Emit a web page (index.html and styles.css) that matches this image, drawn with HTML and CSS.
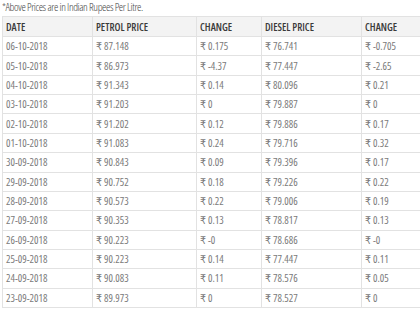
FILE: index.html
```html
<!DOCTYPE html>
<html>
<head>
<meta charset="utf-8">
<link rel="stylesheet" href="styles.css">
</head>
<body>
<p class="note">*Above Prices are in Indian Rupees Per Litre.</p>
<table class="prices">
<colgroup><col class="c1"><col class="c2"><col class="c3"><col class="c4"><col class="c5"></colgroup>
<thead>
<tr><th>DATE</th><th>PETROL PRICE</th><th>CHANGE</th><th>DIESEL PRICE</th><th>CHANGE</th></tr>
</thead>
<tbody>
<tr><td>06-10-2018</td><td>₹ 87.148</td><td>₹ 0.175</td><td>₹ 76.741</td><td>₹ -0.705</td></tr>
<tr><td>05-10-2018</td><td>₹ 86.973</td><td>₹ -4.37</td><td>₹ 77.447</td><td>₹ -2.65</td></tr>
<tr><td>04-10-2018</td><td>₹ 91.343</td><td>₹ 0.14</td><td>₹ 80.096</td><td>₹ 0.21</td></tr>
<tr><td>03-10-2018</td><td>₹ 91.203</td><td>₹ 0</td><td>₹ 79.887</td><td>₹ 0</td></tr>
<tr><td>02-10-2018</td><td>₹ 91.202</td><td>₹ 0.12</td><td>₹ 79.886</td><td>₹ 0.17</td></tr>
<tr><td>01-10-2018</td><td>₹ 91.083</td><td>₹ 0.24</td><td>₹ 79.716</td><td>₹ 0.32</td></tr>
<tr><td>30-09-2018</td><td>₹ 90.843</td><td>₹ 0.09</td><td>₹ 79.396</td><td>₹ 0.17</td></tr>
<tr><td>29-09-2018</td><td>₹ 90.752</td><td>₹ 0.18</td><td>₹ 79.226</td><td>₹ 0.22</td></tr>
<tr><td>28-09-2018</td><td>₹ 90.573</td><td>₹ 0.22</td><td>₹ 79.006</td><td>₹ 0.19</td></tr>
<tr><td>27-09-2018</td><td>₹ 90.353</td><td>₹ 0.13</td><td>₹ 78.817</td><td>₹ 0.13</td></tr>
<tr><td>26-09-2018</td><td>₹ 90.223</td><td>₹ -0</td><td>₹ 78.686</td><td>₹ -0</td></tr>
<tr><td>25-09-2018</td><td>₹ 90.223</td><td>₹ 0.14</td><td>₹ 77.447</td><td>₹ 0.11</td></tr>
<tr><td>24-09-2018</td><td>₹ 90.083</td><td>₹ 0.11</td><td>₹ 78.576</td><td>₹ 0.05</td></tr>
<tr><td>23-09-2018</td><td>₹ 89.973</td><td>₹ 0</td><td>₹ 78.527</td><td>₹ 0</td></tr>
</tbody>
</table>
</body>
</html>
```
FILE: styles.css
```css
html, body {
  margin: 0;
  padding: 0;
  background: #fff;
  overflow: hidden;
}
body {
  font-family: "Open Sans", "DejaVu Sans Condensed", sans-serif;
  font-stretch: 75%;
  color: #666;
  width: 420px;
  height: 315px;
}
.note {
  margin: 0;
  padding: 0 0 0 2px;
  height: 16px;
  line-height: 14px;
  font-size: 11px;
  font-weight: 300;
  letter-spacing: -0.4px;
  color: #444;
}
.prices {
  margin-left: 2px;
  border-collapse: collapse;
  table-layout: fixed;
  width: 418px;
  font-size: 10.5px;
}
.c1 { width: 90px; }
.c2 { width: 104px; }
.c3 { width: 65px; }
.c4 { width: 100px; }
.c5 { width: 59px; }
.prices th, .prices td {
  border: 1px solid #e2e2e2;
  text-align: left;
  padding: 0 0 0 3px;
  white-space: nowrap;
  overflow: hidden;
}
.prices th {
  background: #f3f3f3;
  color: #3a3a3a;
  font-weight: 600;
  height: 19px;
  font-size: 10.5px;
}
.prices td {
  height: 18.36px;
  color: #7a7a7a;
}
```
